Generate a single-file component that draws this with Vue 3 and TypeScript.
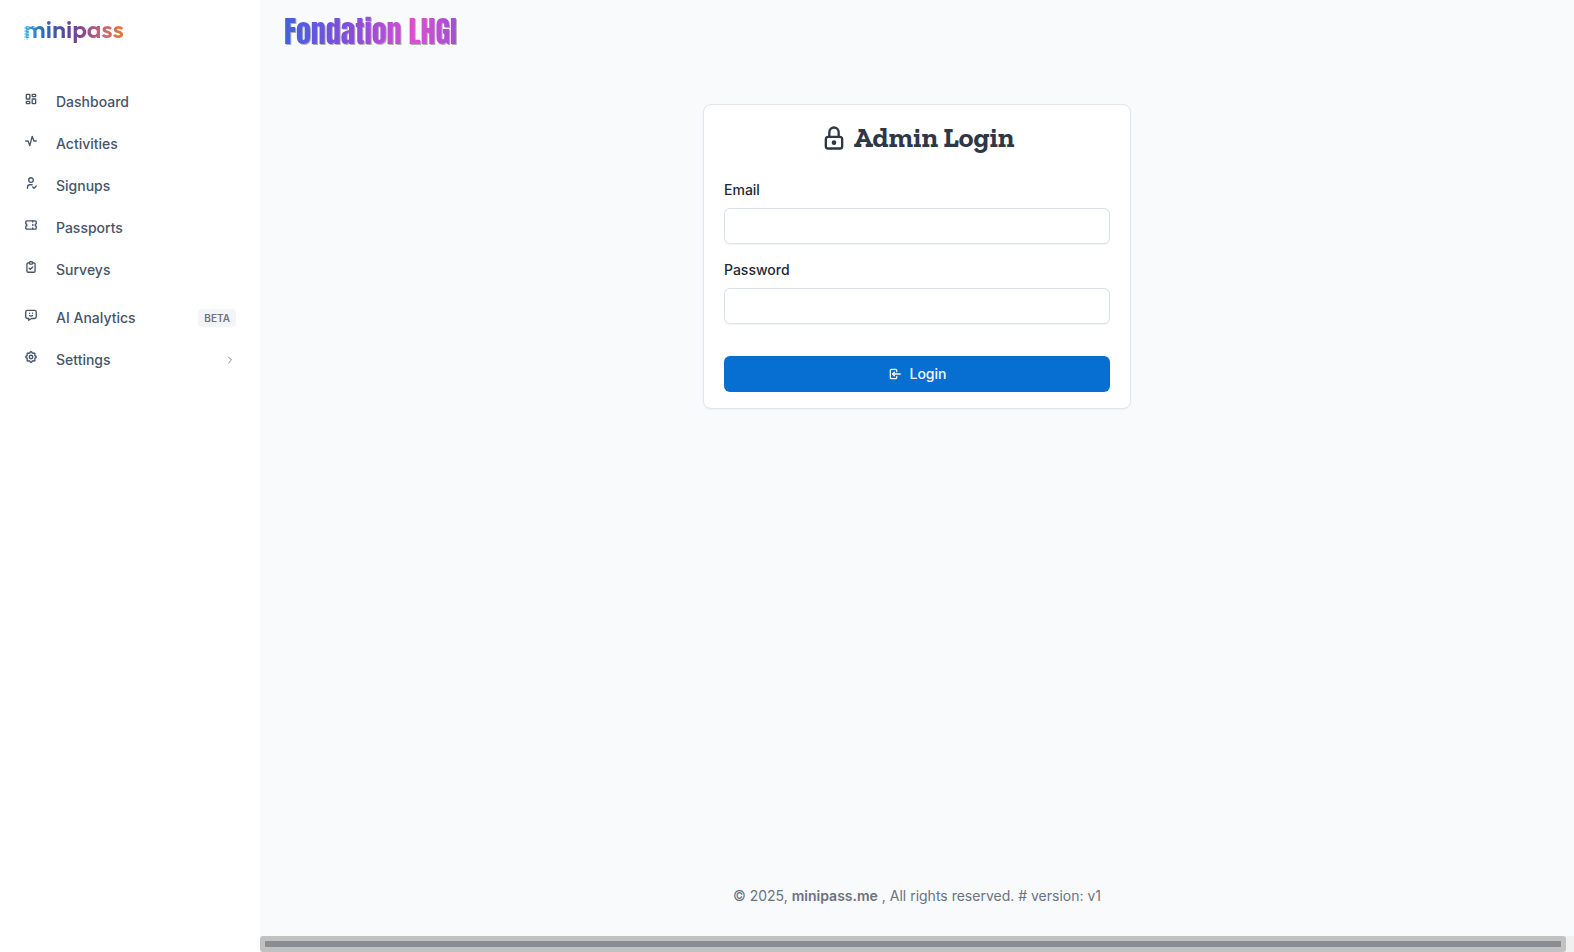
<script setup lang="ts">
import { ref } from 'vue'

interface NavItem {
  label: string
  icon: string[]
  badge?: string
  expandable?: boolean
  spaced?: boolean
}

const navItems: NavItem[] = [
  {
    label: 'Dashboard',
    icon: [
      'M5 4h4a1 1 0 0 1 1 1v6a1 1 0 0 1 -1 1h-4a1 1 0 0 1 -1 -1v-6a1 1 0 0 1 1 -1',
      'M5 16h4a1 1 0 0 1 1 1v2a1 1 0 0 1 -1 1h-4a1 1 0 0 1 -1 -1v-2a1 1 0 0 1 1 -1',
      'M15 12h4a1 1 0 0 1 1 1v6a1 1 0 0 1 -1 1h-4a1 1 0 0 1 -1 -1v-6a1 1 0 0 1 1 -1',
      'M15 4h4a1 1 0 0 1 1 1v2a1 1 0 0 1 -1 1h-4a1 1 0 0 1 -1 -1v-2a1 1 0 0 1 1 -1',
    ],
  },
  { label: 'Activities', icon: ['M3 12h4l3 8l4 -16l3 8h4'] },
  {
    label: 'Signups',
    icon: ['M8 7a4 4 0 1 0 8 0a4 4 0 0 0 -8 0', 'M6 21v-2a4 4 0 0 1 4 -4h4', 'M15 19l2 2l4 -4'],
  },
  {
    label: 'Passports',
    icon: [
      'M15 5v2',
      'M15 11v2',
      'M15 17v2',
      'M5 5h14a2 2 0 0 1 2 2v3a2 2 0 0 0 0 4v3a2 2 0 0 1 -2 2h-14a2 2 0 0 1 -2 -2v-3a2 2 0 0 0 0 -4v-3a2 2 0 0 1 2 -2',
    ],
  },
  {
    label: 'Surveys',
    icon: [
      'M9 5h-2a2 2 0 0 0 -2 2v12a2 2 0 0 0 2 2h10a2 2 0 0 0 2 -2v-12a2 2 0 0 0 -2 -2h-2',
      'M9 5a2 2 0 0 1 2 -2h2a2 2 0 0 1 2 2a2 2 0 0 1 -2 2h-2a2 2 0 0 1 -2 -2z',
      'M9 14l2 2l4 -4',
    ],
  },
  {
    label: 'AI Analytics',
    badge: 'BETA',
    spaced: true,
    icon: [
      'M18 4a3 3 0 0 1 3 3v8a3 3 0 0 1 -3 3h-5l-5 3v-3h-2a3 3 0 0 1 -3 -3v-8a3 3 0 0 1 3 -3h12z',
      'M9.5 9h.01',
      'M14.5 9h.01',
      'M9.5 13a3.5 3.5 0 0 0 5 0',
    ],
  },
  {
    label: 'Settings',
    expandable: true,
    icon: [
      'M10.325 4.317c.426 -1.756 2.924 -1.756 3.35 0a1.724 1.724 0 0 0 2.573 1.066c1.543 -.94 3.31 .826 2.37 2.37a1.724 1.724 0 0 0 1.065 2.572c1.756 .426 1.756 2.924 0 3.35a1.724 1.724 0 0 0 -1.066 2.573c.94 1.543 -.826 3.31 -2.37 2.37a1.724 1.724 0 0 0 -2.572 1.065c-.426 1.756 -2.924 1.756 -3.35 0a1.724 1.724 0 0 0 -2.573 -1.066c-1.543 .94 -3.31 -.826 -2.37 -2.37a1.724 1.724 0 0 0 -1.065 -2.572c-1.756 -.426 -1.756 -2.924 0 -3.35a1.724 1.724 0 0 0 1.066 -2.573c-.94 -1.543 .826 -3.31 2.37 -2.37c1 .608 2.296 .07 2.572 -1.065z',
      'M9 12a3 3 0 1 0 6 0a3 3 0 0 0 -6 0',
    ],
  },
]

const email = ref('')
const password = ref('')
</script>

<template>
  <div class="page">
    <aside class="sidebar">
      <a class="brand" href="#" aria-label="minipass">
        <span class="brand-text">minipass</span>
        <svg class="brand-pixels" viewBox="0 0 14 14" aria-hidden="true">
          <path class="speck-light" d="M1 0v14M4 1v12M7 0v3M10 1v2" />
          <path class="speck-blue" d="M0 1v13M3 0v14M5 2v3" />
        </svg>
      </a>
      <nav class="nav">
        <a
          v-for="item in navItems"
          :key="item.label"
          class="nav-link"
          :class="{ spaced: item.spaced }"
          href="#"
        >
          <svg class="icon nav-icon" viewBox="0 0 24 24" aria-hidden="true">
            <path v-for="d in item.icon" :key="d" :d="d" />
          </svg>
          <span class="nav-label">{{ item.label }}</span>
          <span v-if="item.badge" class="badge">{{ item.badge }}</span>
          <svg v-if="item.expandable" class="icon chevron" viewBox="0 0 24 24" aria-hidden="true">
            <path d="M9 6l6 6l-6 6" />
          </svg>
        </a>
      </nav>
    </aside>

    <div class="content">
      <header class="topbar">
        <span class="org">Fondation LHGI</span>
      </header>

      <main class="main">
        <form class="card" @submit.prevent>
          <h2 class="title">
            <svg class="icon title-icon" viewBox="0 0 24 24" aria-hidden="true">
              <path d="M5 13a2 2 0 0 1 2 -2h10a2 2 0 0 1 2 2v6a2 2 0 0 1 -2 2h-10a2 2 0 0 1 -2 -2v-6z" />
              <path d="M11 16a1 1 0 1 0 2 0a1 1 0 0 0 -2 0" />
              <path d="M8 11v-4a4 4 0 1 1 8 0v4" />
            </svg>
            <span>Admin Login</span>
          </h2>
          <div class="field">
            <label for="email">Email</label>
            <input id="email" v-model="email" type="email" />
          </div>
          <div class="field">
            <label for="password">Password</label>
            <input id="password" v-model="password" type="password" />
          </div>
          <button class="submit" type="submit">
            <svg class="icon submit-icon" viewBox="0 0 24 24" aria-hidden="true">
              <path d="M15 8v-2a2 2 0 0 0 -2 -2h-7a2 2 0 0 0 -2 2v12a2 2 0 0 0 2 2h7a2 2 0 0 0 2 -2v-2" />
              <path d="M21 12h-13l3 -3" />
              <path d="M11 15l-3 -3" />
            </svg>
            <span>Login</span>
          </button>
        </form>
      </main>

      <footer class="footer">
        © 2025, <a href="#">minipass.me</a> , All rights reserved. # version: v1
      </footer>
      <div class="scroll-row" aria-hidden="true">
        <div class="track"><div class="thumb"></div></div>
      </div>
    </div>
  </div>
</template>

<style>
body {
  margin: 0;
  background: #f8fafc;
}
</style>

<style scoped>
.page {
  display: flex;
  min-height: 100vh;
  font-family: Inter, 'Liberation Sans', sans-serif;
  font-size: 14px;
  line-height: 20px;
  color: #1f2937;
}

.icon {
  flex: none;
  fill: none;
  stroke: currentColor;
  stroke-width: 2;
  stroke-linecap: round;
  stroke-linejoin: round;
}

.sidebar {
  flex: none;
  width: 260px;
  background: #fff;
}

.brand {
  position: relative;
  display: block;
  height: 64px;
  padding: 0 24px;
  text-decoration: none;
}

.brand-text {
  font-family: Outfit, Poppins, Montserrat, Lato, sans-serif;
  font-size: 25px;
  font-weight: 600;
  line-height: 58px;
  color: transparent;
  background: linear-gradient(90deg, #36a9e1, #2a6cb8 20%, #5b459c 42%, #85458f 58%, #c4627a 76%, #ee7733);
  background-clip: text;
}

.brand-pixels {
  position: absolute;
  left: 24px;
  top: 26px;
  width: 14px;
  height: 14px;
  fill: none;
  stroke-width: 1;
}

.speck-light {
  stroke: #fff;
  stroke-dasharray: 1 2;
}

.speck-blue {
  stroke: #7cc6ec;
  stroke-dasharray: 2 1;
}

.nav {
  padding-top: 17px;
}

.nav-link {
  display: flex;
  align-items: center;
  height: 42px;
  padding: 0 24px;
  color: #475569;
  font-weight: 500;
  text-decoration: none;
}

.nav-link.spaced {
  margin-top: 6px;
}

.nav-icon {
  width: 14px;
  height: 14px;
  margin: 0 18px 6px 0;
  stroke-width: 2.3;
}

.nav-label {
  flex: 1;
}

.badge {
  padding: 0 6px;
  border-radius: 4px;
  background: #f3f4f6;
  color: #6b7280;
  font-size: 10px;
  font-weight: 600;
  line-height: 18px;
}

.chevron {
  width: 12px;
  height: 12px;
  color: #7b8698;
}

.content {
  flex: 1;
  min-width: 0;
  display: flex;
  flex-direction: column;
  background: #f8fafc;
}

.topbar {
  display: flex;
  align-items: center;
  height: 64px;
  padding: 0 24px;
}

.org {
  font-family: Anton, Roboto, sans-serif;
  font-size: 30px;
  font-weight: 400;
  line-height: 42px;
  color: transparent;
  background: linear-gradient(90deg, #4361e0, #8a4bdb 40%, #dd4fd3 76%, #a04fd3);
  background-clip: text;
  filter: drop-shadow(1px 1px 0 #b0b0b0);
}

.main {
  flex: 1;
  padding: 40px 24px;
}

.card {
  box-sizing: border-box;
  width: 100%;
  max-width: 428px;
  margin: 0 auto;
  padding: 16px 20px;
  border: 1px solid #e2e6eb;
  border-radius: 8px;
  background: #fff;
  box-shadow: 0 1px 2px rgba(31, 41, 55, 0.05);
}

.title {
  display: flex;
  align-items: center;
  justify-content: center;
  gap: 6px;
  margin: 0 0 25px;
  font-family: 'Roboto Slab', 'Zilla Slab', 'DejaVu Serif Condensed', 'DejaVu Serif', serif;
  font-size: 28px;
  font-weight: 700;
  line-height: 34px;
  color: #2d3748;
}

.title-icon {
  width: 28px;
  height: 28px;
}

.field {
  margin-bottom: 16px;
}

.field label {
  display: block;
  margin-bottom: 8px;
  font-weight: 500;
}

.field input {
  display: block;
  box-sizing: border-box;
  width: 100%;
  height: 36px;
  padding: 0 12px;
  border: 1px solid #dce1e7;
  border-radius: 6px;
  background: #fff;
  box-shadow: 0 1px 1px rgba(31, 41, 55, 0.06);
  font: inherit;
  color: inherit;
}

.submit {
  display: flex;
  align-items: center;
  justify-content: center;
  gap: 8px;
  width: 100%;
  height: 36px;
  margin-top: 32px;
  padding: 0;
  border: 0;
  border-radius: 6px;
  background: #066fd1;
  color: #f8fafc;
  font: inherit;
  font-weight: 500;
}

.submit-icon {
  width: 14px;
  height: 14px;
  stroke-width: 2.3;
}

.footer {
  padding: 0 24px 30px;
  text-align: center;
  color: #6b7280;
}

.footer a {
  color: inherit;
  font-weight: 600;
  text-decoration: none;
}

.scroll-row {
  padding-right: 8px;
  background: linear-gradient(90deg, #f8fafc 50%, #f0f0f0 50%);
}

.track {
  padding: 5px;
  border-radius: 3px;
  background: #c1c1c1;
}

.thumb {
  height: 6px;
  background: #8a8d91;
}
</style>
